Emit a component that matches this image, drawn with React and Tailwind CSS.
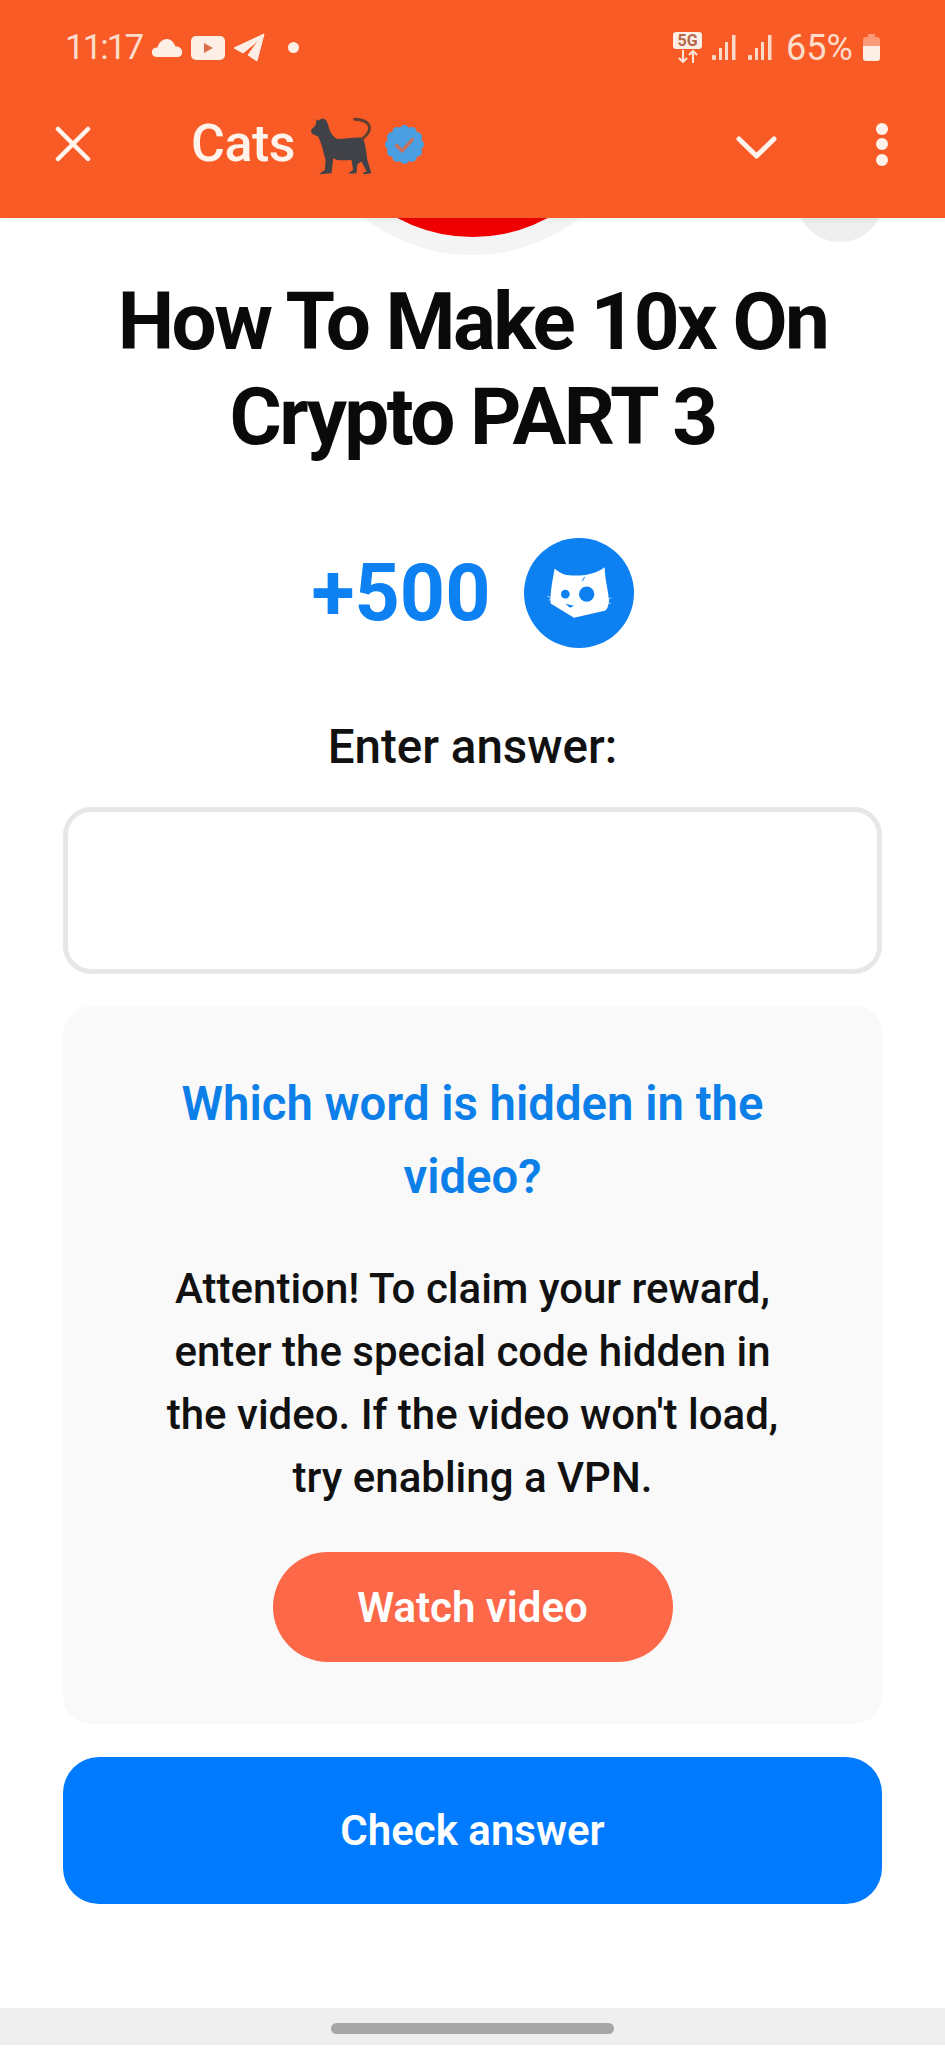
import React from 'react';

const font = { fontFamily: 'Roboto, sans-serif' };

const CatEmoji = () => (
    <svg width="61" height="58" viewBox="28 36 184 174">
        <path
            fill="#404247"
            d="M45 42L52 46L60 40L72 43L80 58C82 75 92 95 108 102C130 102 160 96 184 98C192 112 195 145 198 165L210 205L188 208L184 204L196 200L180 170L168 178L165 205L140 207L155 195L150 165C130 165 110 170 95 160L90 205L52 208L70 195L72 165C65 140 60 115 50 95L30 85L28 75L42 60Z"
        />
        <path d="M184 100C198 90 206 78 204 65C201 50 182 42 160 42" fill="none" stroke="#61402f" strokeWidth="9" strokeLinecap="round" />
    </svg>
);

const VerifiedBadge = () => (
    <svg width="39" height="39" viewBox="0 0 40 40">
        <circle cx="20" cy="20" r="16" fill="#4a9fe3" />
        {[0, 1, 2, 3, 4, 5, 6, 7, 8, 9, 10, 11].map(i => (
            <circle
                key={i}
                cx={20 + 15 * Math.cos((i * Math.PI) / 6)}
                cy={20 + 15 * Math.sin((i * Math.PI) / 6)}
                r="5"
                fill="#4a9fe3"
            />
        ))}
        <path d="M12 21l5.500 5.500L28 15" fill="none" stroke="#c9705c" strokeWidth="3.500" strokeLinecap="round" strokeLinejoin="round" />
    </svg>
);

const StatusLeft = () => (
    <div className="flex items-center">
        <span className="w-[72px] text-[35px] leading-none font-normal text-[#fcdccb] tracking-[-2px] whitespace-nowrap">11:17</span>
        <svg className="ml-[14px]" width="32" height="18" viewBox="0 0 32 19" fill="#fdeee6">
            <path d="M6 19C2 19 0 17 0 14c0-3 2-5 6-5 1-5 5-9 10-9 4 0 7 3 9 8 4 0 7 2 7 6 0 3-2 5-5 5z" />
        </svg>
        <svg className="ml-[8px]" width="34" height="24" viewBox="0 0 34 24">
            <rect width="34" height="24" rx="5" fill="#fdeee6" />
            <path d="M13 7l9 5-9 5z" fill="#d9704a" />
        </svg>
        <svg className="ml-[8px]" width="32" height="29" viewBox="0 0 32 29" fill="#fdeee6" stroke="#fdeee6" strokeLinejoin="round">
            <path d="M31 1L1 15l9 5L26 7 15 22l9 6z" />
        </svg>
        <div className="ml-[23px] w-[11px] h-[11px] rounded-full bg-[#fdeee6]" />
    </div>
);

const SignalBars = () => (
    <svg width="24" height="25" viewBox="0 0 24 25" fill="#fbd9c8">
        <rect x="0" y="20" width="4" height="5" rx="1" />
        <rect x="7" y="13" width="3" height="12" />
        <rect x="13" y="7" width="3" height="18" />
        <rect x="20" y="0" width="3.500" height="25" />
    </svg>
);

const StatusRight = () => (
    <div className="flex items-center">
        <div className="flex flex-col items-center w-[29px]">
            <div className="w-[29px] h-[17px] rounded-[3px] bg-[#fdeee6] text-[#b5694a] text-[16px] leading-[17px] font-bold text-center">5G</div>
            <svg width="22" height="14" viewBox="0 0 22 14" fill="none" stroke="#fde6da" strokeWidth="2">
                <path d="M6 1v12M2 9l4 4 4-4M16 14V2M12 6l4-4 4 4" />
            </svg>
        </div>
        <div className="ml-[10px]"><SignalBars /></div>
        <div className="ml-[12px]"><SignalBars /></div>
        <span className="ml-[14px] w-[69px] text-[36px] leading-none font-normal text-[#fcdccb] whitespace-nowrap">65%</span>
        <svg className="ml-[8px]" width="17" height="27" viewBox="0 0 17 27">
            <path d="M5 0h7v3h2a3 3 0 0 1 3 3v6H0V6a3 3 0 0 1 3-3h2z" fill="#fb9a78" />
            <path d="M0 12h17v12a3 3 0 0 1-3 3H3a3 3 0 0 1-3-3z" fill="#fdeee6" />
        </svg>
    </div>
);

const Header = () => (
    <header className="relative z-10 h-[218px] bg-[#f85b25] shrink-0 shadow-[0_2px_6px_rgba(0,0,0,0.06)]">
        <div className="flex justify-between items-center px-[65px] pt-[15px] h-[80px]">
            <StatusLeft />
            <StatusRight />
        </div>
        <div className="flex items-center pl-[55px] pr-[57px] mt-[35px] h-[58px]">
            <svg width="36" height="36" viewBox="0 0 36 36" stroke="#fff3ec" strokeWidth="4.500" strokeLinecap="round">
                <path d="M3 3l30 30M33 3L3 33" />
            </svg>
            <span className="ml-[100px] text-[52px] leading-none font-medium text-[#fff3ec] tracking-[-0.5px]">Cats</span>
            <span className="ml-[16px] mt-[4px]"><CatEmoji /></span>
            <span className="ml-[13px]"><VerifiedBadge /></span>
            <svg className="ml-auto mt-[6px]" width="41" height="23" viewBox="0 0 41 23" fill="none" stroke="#fff3ec" strokeWidth="5" strokeLinecap="round" strokeLinejoin="round">
                <path d="M3 3l17.500 17L38 3" />
            </svg>
            <div className="ml-[99px] flex flex-col gap-[3.500px]">
                <div className="w-[12px] h-[12px] rounded-full bg-[#fff3ec]" />
                <div className="w-[12px] h-[12px] rounded-full bg-[#fff3ec]" />
                <div className="w-[12px] h-[12px] rounded-full bg-[#fff3ec]" />
            </div>
        </div>
    </header>
);

const CatsCoin = () => (
    <div className="w-[110px] h-[110px] rounded-full bg-[#0d80f2] flex items-center justify-center">
        <svg width="70" height="57" viewBox="40 60 210 170">
            <path d="M72 70C85 82 100 90 115 90C145 94 190 90 222 66C222 100 232 130 235 165C233 185 230 192 222 197L130 218L60 175C58 140 66 105 72 70Z" fill="#fff" />
            <circle cx="104" cy="147" r="13" fill="#0d80f2" />
            <circle cx="168" cy="147" r="23" fill="#0d80f2" />
            <path d="M104 176L130 182L118 188Z" fill="#0d80f2" />
            <path d="M162 95L155 108" stroke="#0d80f2" strokeWidth="3" />
            <path d="M50 153L66 160M54 165L66 162M222 165L242 158M224 172L240 175" stroke="#fff" strokeWidth="2" />
        </svg>
    </div>
);

export default function App() {
    return (
        <div className="w-[945px] h-[2048px] flex flex-col bg-white overflow-hidden" style={font}>
            <Header />
            <main className="relative flex-1 flex flex-col px-[63px]">
                {/* clipped hero coin and close button under the header */}
                <div className="absolute left-[297px] top-[-138px] w-[350px] h-[175px] rounded-b-full bg-[#f4f4f4] flex justify-center">
                    <div className="w-[315px] h-[157px] rounded-b-full bg-[#f00000]" />
                </div>
                <div className="absolute left-[796px] top-[-64px] w-[88px] h-[88px] rounded-full bg-[#eeeeee] flex items-center justify-center">
                    <svg width="36" height="36" viewBox="0 0 36 36" stroke="#bdbdbd" strokeWidth="3">
                        <path d="M3 3l30 30M33 3L3 33" />
                    </svg>
                </div>

                <h1 className="mt-[57px] text-center text-[80px] leading-[95px] font-bold text-[#0a0a0a] tracking-[-2.600px] whitespace-nowrap">
                    How To Make 10x On<br />Crypto PART 3
                </h1>

                <div className="mt-[73px] flex items-center justify-center gap-[33px]">
                    <span className="text-[79px] leading-none font-bold text-[#0d80f2]">+500</span>
                    <CatsCoin />
                </div>

                <p className="mt-[72px] text-center text-[47.500px] leading-[54px] font-medium text-[#111]">Enter answer:</p>

                <div className="mt-[33px] h-[167px] rounded-[28px] border-[5px] border-[#e6e7e9] bg-white" />

                <section className="mt-[32px] h-[718px] rounded-[28px] bg-[#f9f9f9] flex flex-col items-center pt-[62px]">
                    <h2 className="w-[620px] text-center text-[47.300px] leading-[73px] font-semibold text-[#0d7fe8]">
                        Which word is hidden in the video?
                    </h2>
                    <p className="mt-[43px] text-center text-[42px] leading-[63px] font-medium text-[#111] whitespace-nowrap">
                        Attention! To claim your reward,<br />
                        enter the special code hidden in<br />
                        the video. If the video won't load,<br />
                        try enabling a VPN.
                    </p>
                    <button className="mt-[43px] w-[400px] h-[110px] rounded-full bg-[#fd6849] text-white text-[42px] font-semibold">
                        Watch video
                    </button>
                </section>

                <button className="mt-[33px] h-[147px] rounded-[36px] bg-[#007bff] text-white text-[42px] font-semibold">
                    Check answer
                </button>
            </main>
            <div className="h-[37px] mb-[3px] shrink-0 bg-[#efefef] flex justify-center pt-[15px]">
                <div className="w-[283px] h-[11px] rounded-full bg-[#a6a6a6]" />
            </div>
        </div>
    );
}
